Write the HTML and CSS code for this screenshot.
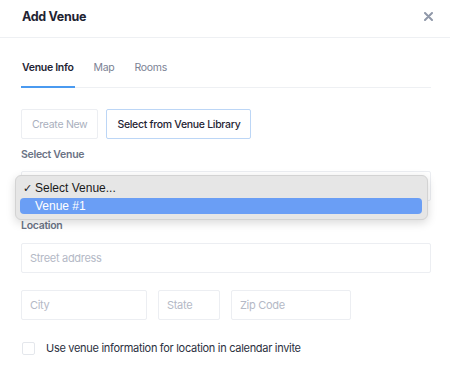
FILE: index.html
```html
<!DOCTYPE html>
<html lang="en">
<head>
  <meta charset="UTF-8" />
  <title>Add Venue</title>
  <link rel="stylesheet" href="styles.css">
</head>
<body>
  <div class="modal">
    <div class="modal-header">
      <h2>Add Venue</h2>
      <button class="close-btn" aria-label="Close">
        <svg width="9" height="9" viewBox="0 0 9 9"><path d="M1 1L8 8M8 1L1 8" stroke="#9098a9" stroke-width="2" stroke-linecap="round"/></svg>
      </button>
    </div>

    <div class="modal-body">
      <!-- Tabs -->
      <div class="tabs">
        <div class="tab active">Venue Info</div>
        <div class="tab">Map</div>
        <div class="tab">Rooms</div>
      </div>

      <div class="source-toggle">
        <button class="toggle-btn">Create New</button>
        <button class="toggle-btn selected">Select from Venue Library</button>
      </div>

      <label class="field-label">Select Venue</label>
      <div class="select-wrap">
        <div class="select-box"></div>
        <!-- native-looking dropdown menu -->
        <div class="dropdown">
          <div class="dropdown-item"><span class="check">✓</span>Select Venue...</div>
          <div class="dropdown-item highlighted">Venue #1</div>
        </div>
      </div>

      <label class="field-label location">Location</label>
      <input class="text-input" type="text" placeholder="Street address" />

      <div class="address-row">
        <input class="text-input city" type="text" placeholder="City" />
        <input class="text-input state" type="text" placeholder="State" />
        <input class="text-input zip" type="text" placeholder="Zip Code" />
      </div>

      <label class="checkbox-row">
        <span class="checkbox"></span>
        Use venue information for location in calendar invite
      </label>
    </div>
  </div>
</body>
</html>
```

FILE: styles.css
```css
body {
  margin: 0;
  font-family: 'Inter', sans-serif;
  letter-spacing: -0.3px;
  background-color: white;
  color: #1f2433;
}

.modal {
  width: 450px;
}

.modal-header {
  display: flex;
  justify-content: space-between;
  align-items: center;
  box-sizing: border-box;
  height: 38px;
  padding: 0 17px 4px 22px;
  border-bottom: 1px solid #eef0f3;
}

.modal-header h2 {
  margin: 0;
  font-size: 12.5px;
  font-weight: 700;
  color: #1f2433;
}

.close-btn {
  display: flex;
  padding: 0;
  border: none;
  background: none;
}

.modal-body {
  padding: 0 19px 0 21px;
}

.tabs {
  display: flex;
  gap: 18px;
  margin-top: 22px;
  border-bottom: 1px solid #eef0f3;
}

.tab {
  font-size: 10.5px;
  line-height: 16px;
  padding: 0 1px 10px;
  margin-bottom: -1px;
  color: #7b8294;
  border-bottom: 2px solid transparent;
}

.tab.active {
  color: #1f2433;
  font-weight: 600;
  border-bottom-color: #4a9af0;
}

.source-toggle {
  display: flex;
  gap: 8px;
  margin-top: 21px;
}

.toggle-btn {
  height: 30px;
  padding: 0 10px;
  font-family: 'Inter', sans-serif;
  letter-spacing: -0.3px;
  font-size: 10.5px;
  background: white;
  border: 1px solid #eceef2;
  border-radius: 2px;
  color: #a9afbd;
}

.toggle-btn.selected {
  border-color: #bcd6f6;
  color: #1f2433;
  font-weight: 500;
}

.field-label {
  display: block;
  margin-top: 9px;
  font-size: 10.5px;
  line-height: 14px;
  font-weight: 600;
  color: #6b7385;
}

.field-label.location {
  margin-top: 18px;
}

.select-wrap {
  position: relative;
  margin-top: 9px;
}

.select-box {
  height: 28px;
  border: 1px solid #eceef2;
  border-radius: 2px;
}

.dropdown {
  position: absolute;
  top: 4px;
  left: -6px;
  width: 402px;
  padding: 4px 5px 5px 4px;
  background-color: #e6e6e6;
  border: 1px solid #d3d3d3;
  border-radius: 6px;
  box-shadow: 0 3px 10px rgba(0, 0, 0, 0.15);
  font-family: 'Liberation Sans', sans-serif;
  letter-spacing: 0;
  font-size: 12px;
  color: #1a1a1a;
}

.dropdown-item {
  position: relative;
  height: 16px;
  line-height: 16px;
  padding-left: 15px;
}

.dropdown-item + .dropdown-item {
  margin-top: 2px;
}

.dropdown-item .check {
  position: absolute;
  left: 3px;
  font-size: 11px;
}

.dropdown-item.highlighted {
  background-color: #6a9ef5;
  color: white;
  border-radius: 4px;
}

.text-input {
  display: block;
  box-sizing: border-box;
  width: 100%;
  height: 30px;
  margin-top: 10px;
  padding: 0 8px;
  font-family: 'Inter', sans-serif;
  letter-spacing: -0.3px;
  font-size: 11px;
  border: 1px solid #eceef2;
  border-radius: 2px;
  color: #1f2433;
}

.text-input::placeholder {
  color: #b4b9c6;
}

.address-row {
  display: flex;
  gap: 11px;
  margin-top: 17px;
}

.address-row .text-input {
  margin-top: 0;
}

.address-row .city {
  width: 126px;
}

.address-row .state {
  width: 62px;
}

.address-row .zip {
  width: 120px;
}

.checkbox-row {
  display: flex;
  align-items: center;
  gap: 11px;
  margin-top: 21px;
  font-size: 11px;
  color: #2b3040;
}

.checkbox {
  width: 11px;
  height: 11px;
  margin-left: 1px;
  border: 1px solid #e4e7ec;
  border-radius: 2px;
}
```
